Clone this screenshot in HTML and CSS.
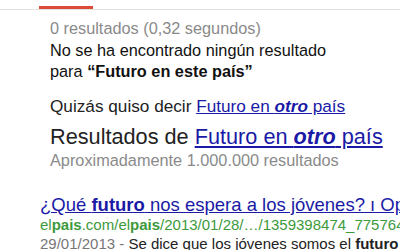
FILE: index.html
```html
<!DOCTYPE html>
<html lang="es">
<head>
<meta charset="utf-8">
<link rel="stylesheet" href="styles.css">
</head>
<body>
<div class="tabs"><div class="active-tab"></div></div>
<div class="info">
  <div class="stats">0 resultados (0,32 segundos)</div>
  <div class="noresult">No se ha encontrado ningún resultado<br>para <b>“Futuro en este país”</b></div>
  <div class="didyou">Quizás quiso decir <a href="#">Futuro en <b><i>otro</i></b> país</a></div>
  <div class="showing">Resultados de <a href="#">Futuro en <b><i>otro</i></b> país</a></div>
  <div class="approx">Aproximadamente 1.000.000 resultados</div>
</div>
<div class="result">
  <a class="title" href="#">¿Qué <b>futuro</b> nos espera a los jóvenes? ı Opinión</a>
  <div class="url">el<b>pais</b>.com/el<b>pais</b>/2013/01/28/…/1359398474_775764.html</div>
  <div class="snippet"><span class="date">29/01/2013 - </span> Se dice que los jóvenes somos el <b>futuro</b> del país</div>
</div>
</body>
</html>
```
FILE: styles.css
```css
html, body {
  margin: 0;
  padding: 0;
  background: #fff;
  overflow: hidden;
}
body {
  font-family: "Liberation Sans", Arial, sans-serif;
  width: 400px;
  height: 250px;
}
.tabs {
  height: 9px;
  border-bottom: 1px solid #e2e2e2;
  padding-left: 39px;
  display: flex;
  align-items: flex-end;
}
.active-tab {
  width: 54px;
  height: 3px;
  background: #dd4b39;
}
.info {
  padding-left: 50px;
  white-space: nowrap;
}
.stats {
  color: #8a8a8a;
  font-size: 16.3px;
  margin-top: 7px;
  line-height: 22px;
}
.noresult {
  color: #111;
  font-size: 16.3px;
  line-height: 21px;
  margin-top: 1px;
}
.didyou {
  color: #222;
  font-size: 17.2px;
  line-height: 22px;
  margin-top: 13px;
}
.showing {
  color: #222;
  font-size: 21.7px;
  line-height: 26px;
  margin-top: 7px;
}
.approx {
  color: #8a8a8a;
  font-size: 16.3px;
  line-height: 21px;
}
a {
  color: #1a1aa6;
  text-decoration: underline;
}
.result {
  margin-top: 24px;
  padding-left: 40px;
  white-space: nowrap;
  overflow: hidden;
}
.title {
  display: block;
  font-size: 18.5px;
  line-height: 20px;
}
.url {
  color: #3d9a3d;
  font-size: 15px;
  line-height: 19px;
}
.snippet {
  color: #222;
  font-size: 15px;
  line-height: 19px;
}
.date {
  color: #777;
}
```
